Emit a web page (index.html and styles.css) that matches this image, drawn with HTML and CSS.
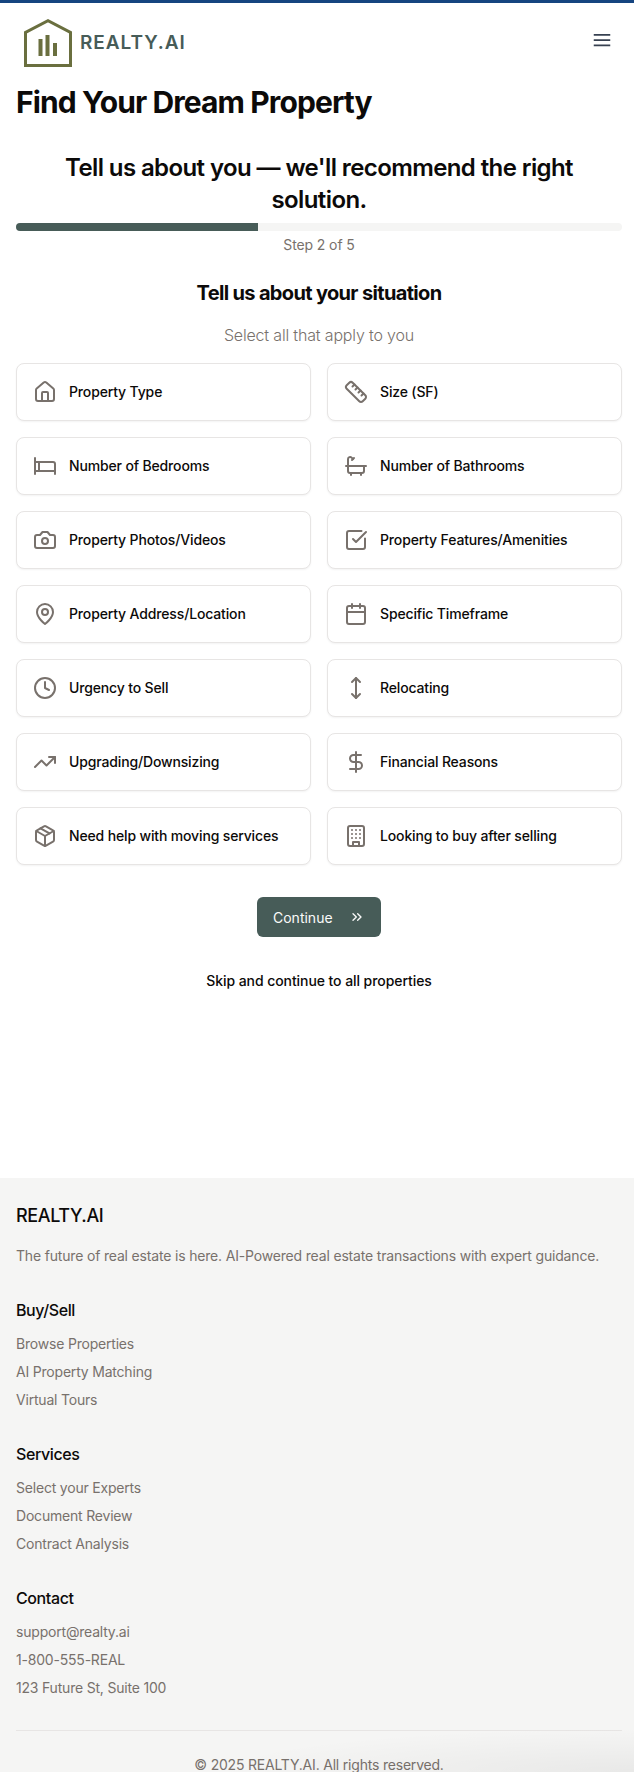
FILE: index.html
```html
<!DOCTYPE html>
<html lang="en">
<head>
<meta charset="utf-8">
<title>REALTY.AI</title>
<link rel="stylesheet" href="styles.css">
</head>
<body>
<svg width="0" height="0" class="defs">
  <symbol id="i-house" viewBox="0 0 24 24"><path d="M15 21v-8a1 1 0 0 0-1-1h-4a1 1 0 0 0-1 1v8"/><path d="M3 10a2 2 0 0 1 .709-1.528l7-5.999a2 2 0 0 1 2.582 0l7 5.999A2 2 0 0 1 21 10v9a2 2 0 0 1-2 2H5a2 2 0 0 1-2-2z"/></symbol>
  <symbol id="i-ruler" viewBox="0 0 24 24"><path d="M21.3 15.3a2.4 2.4 0 0 1 0 3.4l-2.6 2.6a2.4 2.4 0 0 1-3.4 0L2.7 8.7a2.41 2.41 0 0 1 0-3.4l2.6-2.6a2.41 2.41 0 0 1 3.4 0Z"/><path d="m14.5 12.5 2-2"/><path d="m11.5 9.5 2-2"/><path d="m8.5 6.5 2-2"/><path d="m17.5 15.5 2-2"/></symbol>
  <symbol id="i-bed" viewBox="0 0 24 24"><path d="M2 4v16"/><path d="M2 8h18a2 2 0 0 1 2 2v10"/><path d="M2 17h20"/><path d="M6 8v9"/></symbol>
  <symbol id="i-bath" viewBox="0 0 24 24"><path d="M10 4 8 6"/><path d="M17 19v2"/><path d="M2 12h20"/><path d="M7 19v2"/><path d="M9 5 7.621 3.621A2.121 2.121 0 0 0 4 5v12a2 2 0 0 0 2 2h12a2 2 0 0 0 2-2v-5"/></symbol>
  <symbol id="i-camera" viewBox="0 0 24 24"><path d="M14.5 4h-5L7 7H4a2 2 0 0 0-2 2v9a2 2 0 0 0 2 2h16a2 2 0 0 0 2-2V9a2 2 0 0 0-2-2h-3l-2.5-3z"/><circle cx="12" cy="13" r="3"/></symbol>
  <symbol id="i-check" viewBox="0 0 24 24"><path d="M21 10.5V19a2 2 0 0 1-2 2H5a2 2 0 0 1-2-2V5a2 2 0 0 1 2-2h12.5"/><path d="m9 11 3 3L22 4"/></symbol>
  <symbol id="i-pin" viewBox="0 0 24 24"><path d="M20 10c0 6-8 12-8 12s-8-6-8-12a8 8 0 0 1 16 0Z"/><circle cx="12" cy="10" r="3"/></symbol>
  <symbol id="i-calendar" viewBox="0 0 24 24"><path d="M8 2v4"/><path d="M16 2v4"/><rect width="18" height="18" x="3" y="4" rx="2"/><path d="M3 10h18"/></symbol>
  <symbol id="i-clock" viewBox="0 0 24 24"><circle cx="12" cy="12" r="10"/><polyline points="12 6 12 12 16 14"/></symbol>
  <symbol id="i-move" viewBox="0 0 24 24"><path d="M12 2v20"/><path d="m8 18 4 4 4-4"/><path d="m8 6 4-4 4 4"/></symbol>
  <symbol id="i-trend" viewBox="0 0 24 24"><polyline points="22 7 13.5 15.5 8.5 10.5 2 17"/><polyline points="16 7 22 7 22 13"/></symbol>
  <symbol id="i-dollar" viewBox="0 0 24 24"><line x1="12" x2="12" y1="2" y2="22"/><path d="M17 5H9.5a3.5 3.5 0 0 0 0 7h5a3.5 3.5 0 0 1 0 7H6"/></symbol>
  <symbol id="i-package" viewBox="0 0 24 24"><path d="m7.5 4.27 9 5.15"/><path d="M21 8a2 2 0 0 0-1-1.73l-7-4a2 2 0 0 0-2 0l-7 4A2 2 0 0 0 3 8v8a2 2 0 0 0 1 1.73l7 4a2 2 0 0 0 2 0l7-4A2 2 0 0 0 21 16Z"/><path d="m3.3 7 8.7 5 8.7-5"/><path d="M12 22V12"/></symbol>
  <symbol id="i-building" viewBox="0 0 24 24"><rect width="16" height="20" x="4" y="2" rx="2" ry="2"/><path d="M9 22v-4h6v4"/><path d="M8 6h.01"/><path d="M16 6h.01"/><path d="M12 6h.01"/><path d="M12 10h.01"/><path d="M12 14h.01"/><path d="M16 10h.01"/><path d="M16 14h.01"/><path d="M8 10h.01"/><path d="M8 14h.01"/></symbol>
</svg>

<header class="site-header">
  <a class="brand" href="#">
    <svg class="brand-mark" viewBox="0 0 48 48" width="48" height="48" aria-hidden="true">
      <path class="mark-house" d="M1.500 46.500V13.400L24 1.700l22.500 11.700v33.100z"/>
      <rect class="mark-bar" x="14.500" y="20" width="4" height="17"/>
      <rect class="mark-bar" x="21.500" y="16" width="4" height="21"/>
      <rect class="mark-bar" x="29" y="24" width="4" height="13"/>
    </svg>
    <span class="brand-name">REALTY.AI</span>
  </a>
  <button class="menu-btn" type="button" aria-label="Menu">
    <svg viewBox="0 0 24 24" width="24" height="24"><path d="M3.750 6.750h16.500M3.750 12h16.500M3.750 17.250h16.500"/></svg>
  </button>
</header>

<main class="page">
  <h1 class="title">Find Your Dream Property</h1>
  <p class="lead">Tell us about you — we'll recommend the right solution.</p>
  <div class="progress"><div class="progress-fill" style="width:40%"></div></div>
  <p class="step">Step 2 of 5</p>
  <h2 class="question">Tell us about your situation</h2>
  <p class="hint">Select all that apply to you</p>

  <div class="options">
    <button class="option" type="button"><svg class="icon"><use href="#i-house"/></svg><span>Property Type</span></button>
    <button class="option" type="button"><svg class="icon"><use href="#i-ruler"/></svg><span>Size (SF)</span></button>
    <button class="option" type="button"><svg class="icon"><use href="#i-bed"/></svg><span>Number of Bedrooms</span></button>
    <button class="option" type="button"><svg class="icon"><use href="#i-bath"/></svg><span>Number of Bathrooms</span></button>
    <button class="option" type="button"><svg class="icon"><use href="#i-camera"/></svg><span>Property Photos/Videos</span></button>
    <button class="option" type="button"><svg class="icon"><use href="#i-check"/></svg><span>Property Features/Amenities</span></button>
    <button class="option" type="button"><svg class="icon"><use href="#i-pin"/></svg><span>Property Address/Location</span></button>
    <button class="option" type="button"><svg class="icon"><use href="#i-calendar"/></svg><span>Specific Timeframe</span></button>
    <button class="option" type="button"><svg class="icon"><use href="#i-clock"/></svg><span>Urgency to Sell</span></button>
    <button class="option" type="button"><svg class="icon"><use href="#i-move"/></svg><span>Relocating</span></button>
    <button class="option" type="button"><svg class="icon"><use href="#i-trend"/></svg><span>Upgrading/Downsizing</span></button>
    <button class="option" type="button"><svg class="icon"><use href="#i-dollar"/></svg><span>Financial Reasons</span></button>
    <button class="option" type="button"><svg class="icon"><use href="#i-package"/></svg><span>Need help with moving services</span></button>
    <button class="option" type="button"><svg class="icon"><use href="#i-building"/></svg><span>Looking to buy after selling</span></button>
  </div>

  <div class="actions">
    <button class="continue" type="button">Continue
      <svg viewBox="0 0 24 24" width="16" height="16"><path d="m6 17 5-5-5-5"/><path d="m13 17 5-5-5-5"/></svg>
    </button>
    <a class="skip" href="#">Skip and continue to all properties</a>
  </div>
</main>

<footer class="footer">
  <div class="footer-brand">
    <h3 class="footer-name">REALTY.AI</h3>
    <p class="footer-text">The future of real estate is here. AI-Powered real estate transactions with expert guidance.</p>
  </div>
  <div class="footer-col">
    <h4 class="footer-head">Buy/Sell</h4>
    <ul class="footer-list"><li>Browse Properties</li><li>AI Property Matching</li><li>Virtual Tours</li></ul>
  </div>
  <div class="footer-col">
    <h4 class="footer-head">Services</h4>
    <ul class="footer-list"><li>Select your Experts</li><li>Document Review</li><li>Contract Analysis</li></ul>
  </div>
  <div class="footer-col">
    <h4 class="footer-head">Contact</h4>
    <ul class="footer-list"><li>support@realty.ai</li><li>1-800-555-REAL</li><li>123 Future St, Suite 100</li></ul>
  </div>
  <p class="copyright">© 2025 REALTY.AI. All rights reserved.</p>
</footer>
</body>
</html>
```

FILE: styles.css
```css
* { box-sizing: border-box; }
html, body { height: 1772px; overflow: hidden; }
body {
  margin: 0;
  font-family: Inter, "Liberation Sans", sans-serif;
  color: #0c0a09;
  background: #fff;
}
.defs { position: absolute; }
h1, h2, h3, h4, p, ul { margin: 0; padding: 0; }
ul { list-style: none; }
button { font: inherit; color: inherit; cursor: pointer; }
a { color: inherit; text-decoration: none; }

.site-header {
  display: flex;
  align-items: flex-start;
  justify-content: space-between;
  height: 84px;
  padding: 16px 20px 0 24px;
  border-top: 3px solid #164580;
}
.brand { display: flex; align-items: center; gap: 8px; }
.brand-mark { display: block; }
.mark-house { fill: none; stroke: #6a6f3f; stroke-width: 3; }
.mark-bar { fill: #6a6f3f; }
.brand-name {
  font-size: 19px;
  line-height: 28px;
  font-weight: 600;
  letter-spacing: 0.95px;
  color: #475c58;
}
.menu-btn { padding: 0; border: 0; background: none; display: block; margin-top: 9px; }
.menu-btn svg { display: block; fill: none; stroke: #374151; stroke-width: 1.75; }

.page { padding: 0 12px 0 16px; }
.title { font-size: 30px; line-height: 36px; font-weight: 700; letter-spacing: -0.9px; }
.lead {
  margin-top: 32px;
  font-size: 24px;
  line-height: 32px;
  font-weight: 600;
  letter-spacing: -0.6px;
  text-align: center;
}
.progress {
  margin-top: 7px;
  height: 8px;
  border-radius: 4px;
  background: #f5f5f4;
  overflow: hidden;
}
.progress-fill { height: 100%; background: #475c58; }
.step {
  margin-top: 4px;
  font-size: 14px;
  line-height: 20px;
  letter-spacing: -0.1px;
  text-align: center;
  color: #78716c;
}
.question {
  margin-top: 24px;
  font-size: 20px;
  line-height: 28px;
  font-weight: 700;
  letter-spacing: -0.66px;
  text-align: center;
}
.hint {
  margin-top: 16px;
  font-size: 16px;
  line-height: 24px;
  font-weight: 300;
  letter-spacing: -0.17px;
  text-align: center;
  color: #78716c;
}
.options {
  margin-top: 16px;
  display: grid;
  grid-template-columns: 1fr 1fr;
  gap: 16px;
}
.option {
  display: flex;
  align-items: center;
  gap: 12px;
  height: 58px;
  padding: 0 16px;
  text-align: left;
  font-size: 14px;
  line-height: 20px;
  font-weight: 500;
  letter-spacing: -0.15px;
  background: #fff;
  border: 1px solid #e7e5e4;
  border-radius: 8px;
  box-shadow: 0 1px 2px rgba(0, 0, 0, .05);
}
.icon {
  width: 24px;
  height: 24px;
  flex: none;
  fill: none;
  stroke: #78716c;
  stroke-width: 2;
  stroke-linecap: round;
  stroke-linejoin: round;
}
.actions {
  margin-top: 32px;
  display: flex;
  flex-direction: column;
  align-items: center;
}
.continue {
  display: flex;
  align-items: center;
  justify-content: space-between;
  width: 124px;
  height: 40px;
  padding: 0 16px;
  font-size: 14px;
  font-weight: 400;
  color: #fafaf9;
  background: #475c58;
  border: 0;
  border-radius: 6px;
}
.continue svg { fill: none; stroke: #fafaf9; stroke-width: 2; stroke-linecap: round; stroke-linejoin: round; }
.skip {
  margin-top: 34px;
  font-size: 14px;
  line-height: 20px;
  font-weight: 500;
  letter-spacing: -0.07px;
}

.footer {
  position: relative;
  margin-top: 187px;
  background: #f5f5f4;
  padding: 24px 12px 0 16px;
}
.footer::after {
  content: "";
  position: absolute;
  left: 0;
  right: 0;
  top: 550px;
  height: 44px;
  background: radial-gradient(ellipse 420px 44px at 100% 100%, rgba(0, 0, 0, .05), rgba(0, 0, 0, 0));
  pointer-events: none;
}
.footer-name { font-size: 18px; line-height: 28px; font-weight: 500; letter-spacing: -0.37px; }
.footer-text { margin-top: 16px; font-size: 14px; line-height: 20px; letter-spacing: -0.175px; color: #78716c; }
.footer-col { margin-top: 32px; }
.footer-head { font-size: 16px; line-height: 24px; font-weight: 500; letter-spacing: -0.4px; }
.footer-list { margin-top: 12px; display: grid; gap: 8px; font-size: 14px; line-height: 20px; letter-spacing: -0.2px; color: #78716c; }
.copyright {
  margin-top: 32px;
  padding-top: 24px;
  border-top: 1px solid #e7e5e4;
  font-size: 14px;
  line-height: 20px;
  letter-spacing: -0.2px;
  text-align: center;
  color: #78716c;
}
```
